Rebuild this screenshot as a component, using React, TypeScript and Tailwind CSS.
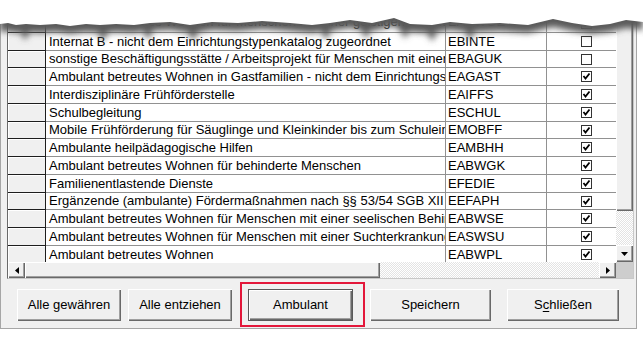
import React from 'react'

type Row = { name: string; code: string; checked: boolean }

const rows: Row[] = [
  { name: 'Ambulant betreutes Wohnen für Menschen mit einer geistigen Behinderung', code: 'EABWGE', checked: true },
  { name: 'Internat B - nicht dem Einrichtungstypenkatalog zugeordnet', code: 'EBINTE', checked: false },
  { name: 'sonstige Beschäftigungsstätte / Arbeitsprojekt für Menschen mit einer Behinderung', code: 'EBAGUK', checked: false },
  { name: 'Ambulant betreutes Wohnen in Gastfamilien - nicht dem Einrichtungstypenkatalog', code: 'EAGAST', checked: true },
  { name: 'Interdisziplinäre Frühförderstelle', code: 'EAIFFS', checked: true },
  { name: 'Schulbegleitung', code: 'ESCHUL', checked: true },
  { name: 'Mobile Frühförderung für Säuglinge und Kleinkinder bis zum Schuleintritt', code: 'EMOBFF', checked: true },
  { name: 'Ambulante heilpädagogische Hilfen', code: 'EAMBHH', checked: true },
  { name: 'Ambulant betreutes Wohnen für behinderte Menschen', code: 'EABWGK', checked: true },
  { name: 'Familienentlastende Dienste', code: 'EFEDIE', checked: true },
  { name: 'Ergänzende (ambulante) Fördermaßnahmen nach §§ 53/54 SGB XII', code: 'EEFAPH', checked: true },
  { name: 'Ambulant betreutes Wohnen für Menschen mit einer seelischen Behinderung', code: 'EABWSE', checked: true },
  { name: 'Ambulant betreutes Wohnen für Menschen mit einer Suchterkrankung', code: 'EASWSU', checked: true },
  { name: 'Ambulant betreutes Wohnen', code: 'EABWPL', checked: true },
]

// row heights average 17.75px in the screenshot
const heightClass = (i: number) => {
  if (i === 0) return 'h-[33px]'
  return i % 4 === 2 ? 'h-[17px]' : 'h-[18px]'
}

const bevel = 'shadow-[inset_1px_1px_0_#ffffff,inset_-1px_-1px_0_#696969,inset_-2px_-2px_0_#a0a0a0]'
const dither = 'bg-[repeating-conic-gradient(#ffffff_0%_25%,#e3e3e3_0%_50%)] bg-[length:2px_2px]'

function CheckBox({ checked }: { checked: boolean }) {
  return (
    <svg width="11" height="11" viewBox="0 0 11 11">
      <rect x="0.5" y="0.5" width="10" height="10" fill="#fff" stroke="#333" />
      {checked && <path d="M2.5 5 L4.5 7.5 L8.5 2.5" fill="none" stroke="#000" strokeWidth="1.8" />}
    </svg>
  )
}

function Arrow({ dir }: { dir: 'down' | 'left' | 'right' }) {
  const d = dir === 'down' ? 'M0 0 H7 L3.5 4 Z' : dir === 'right' ? 'M0 0 V7 L4 3.5 Z' : 'M4 0 V7 L0 3.5 Z'
  const w = dir === 'down' ? 7 : 4
  const h = dir === 'down' ? 4 : 7
  return (
    <svg width={w} height={h} viewBox={`0 0 ${w} ${h}`}>
      <path d={d} fill="#000" />
    </svg>
  )
}

function GridRow({ row, i }: { row: Row; i: number }) {
  const align = i === 0 ? 'items-end pb-[1px]' : 'items-center'
  return (
    <div className={`flex ${heightClass(i)}`}>
      <div className="w-[38px] shrink-0 bg-[#f0f0f0] border-r border-b border-[#1e1e1e] shadow-[inset_1px_1px_0_#ffffff]" />
      <div className={`w-[400px] shrink-0 bg-white border-r border-b border-[#919191] flex ${align} overflow-hidden`}>
        <span className="pl-[3px] whitespace-nowrap">{row.name}</span>
      </div>
      <div className={`w-[101px] shrink-0 bg-white border-r border-b border-[#919191] flex ${align} overflow-hidden`}>
        <span className="pl-[2px] whitespace-nowrap">{row.code}</span>
      </div>
      <div className={`w-[69px] shrink-0 bg-white border-b border-[#919191] flex ${i === 0 ? 'items-end pb-[3px]' : 'items-center'} pl-[34px]`}>
        <CheckBox checked={row.checked} />
      </div>
    </div>
  )
}

function WinButton({ children, width, className = '' }: { children: React.ReactNode; width: string; className?: string }) {
  return (
    <div className={`${width} h-[32px] bg-[#f0f0f0] flex items-center justify-center ${bevel} ${className}`}>
      {children}
    </div>
  )
}

const edge: [number, number][] = [
  [0, 24], [8, 23], [16, 25], [26, 24], [40, 25], [56, 24], [70, 26], [86, 24], [100, 25], [116, 24],
  [134, 25], [150, 23], [170, 22], [190, 25], [212, 22], [238, 23], [262, 21], [290, 23], [312, 25],
  [330, 23], [350, 20], [372, 23], [394, 18], [410, 24], [432, 25], [450, 22], [472, 24], [500, 23],
  [528, 25], [553, 19], [572, 23], [592, 26], [610, 24], [626, 20], [643, 22],
]
const drips = [25, 103, 148, 193, 326, 366, 405, 432, 470]

function TornTop() {
  const white =
    `M0 0 H643 V${edge[edge.length - 1][1]} ` +
    edge.slice().reverse().map(([x, y]) => `L${x} ${y}`).join(' ') +
    ' Z'
  const pts: string[] = []
  edge.forEach(([x, y], idx) => {
    pts.push(`L${x} ${y + 8}`)
    const next = edge[idx + 1]
    if (next) {
      drips
        .filter((d) => d > x && d <= next[0])
        .forEach((d) => {
          const yy = y + ((next[1] - y) * (d - x)) / (next[0] - x)
          pts.push(`L${d - 5} ${yy + 8} L${d} ${yy + 16} L${d + 5} ${yy + 8}`)
        })
    }
  })
  const shadow = 'M0 0 ' + pts.join(' ') + ' L643 0 Z'
  return (
    <svg className="absolute left-0 top-0" width="643" height="52" viewBox="0 0 643 52">
      <defs>
        <filter id="blur" x="-5%" y="-50%" width="110%" height="200%">
          <feGaussianBlur stdDeviation="3" />
        </filter>
      </defs>
      <path d={shadow} fill="#5a5a5a" filter="url(#blur)" />
      <path d={white} fill="#ffffff" />
    </svg>
  )
}

export default function App() {
  return (
    <div className="relative w-[643px] h-[338px] overflow-hidden bg-white text-[13px] text-black font-['Liberation_Sans',Arial,sans-serif]">
      <div className="w-[637px] h-[329px] bg-[#f0f0f0] border-l border-r border-b border-[#a6a6a6] flex flex-col">
        {/* grid */}
        <div className="ml-[6px] w-[627px] border-l border-r border-b border-l-[#696969] border-r-[#c8c8c8] border-b-[#c8c8c8] flex flex-col">
          <div className="flex h-[262px]">
            <div className="w-[608px] overflow-hidden">
              {rows.map((row, i) => (
                <GridRow key={row.code} row={row} i={i} />
              ))}
            </div>
            {/* vertical scrollbar */}
            <div className="w-[17px] flex flex-col">
              <div className={`h-[211px] bg-[#f0f0f0] ${bevel}`} />
              <div className={`flex-1 ${dither}`} />
              <div className={`h-[17px] bg-[#f0f0f0] flex items-center justify-center ${bevel}`}>
                <Arrow dir="down" />
              </div>
            </div>
          </div>
          {/* horizontal scrollbar */}
          <div className="flex h-[16px]">
            <div className={`w-[17px] bg-[#f0f0f0] flex items-center justify-center ${bevel}`}>
              <Arrow dir="left" />
            </div>
            <div className={`flex-1 flex ${dither}`}>
              <div className={`w-[355px] bg-[#f0f0f0] ${bevel}`} />
            </div>
            <div className={`w-[17px] bg-[#f0f0f0] flex items-center justify-center ${bevel}`}>
              <Arrow dir="right" />
            </div>
            <div className="w-[17px] bg-[#cdcdcd]" />
          </div>
        </div>
        {/* buttons */}
        <div className="flex items-start">
          <WinButton width="w-[104px]" className="ml-[16px] mt-[10px]">Alle gewähren</WinButton>
          <WinButton width="w-[104px]" className="ml-[7px] mt-[10px]">Alle entziehen</WinButton>
          <div className="ml-[8px] mt-[3px] border-2 border-[#e3173a] pl-[6px] pr-[10px] pt-[5px] pb-[4px]">
            <div className={`w-[105px] h-[32px] bg-[#f0f0f0] border border-[#5a5a5a] flex items-center justify-center ${bevel}`}>
              Ambulant
            </div>
          </div>
          <WinButton width="w-[121px]" className="ml-[5px] mt-[10px]">Speichern</WinButton>
          <WinButton width="w-[112px]" className="ml-[16px] mt-[10px]">
            <span>
              S<span className="underline underline-offset-2">c</span>hließen
            </span>
          </WinButton>
        </div>
      </div>
      <TornTop />
    </div>
  )
}
